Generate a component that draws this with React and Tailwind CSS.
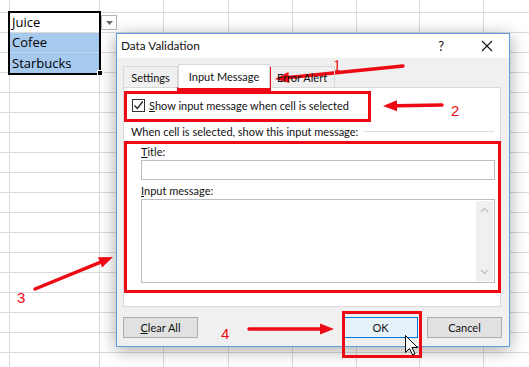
const colW = ["w-[10px]", "w-[90px]", "w-[64px]", "w-[65px]", "w-[64px]", "w-[64px]", "w-[63px]", "w-[64px]", "w-[64px]"];

function Sheet() {
  const rows = Array.from({ length: 19 }, (_, i) => i);
  return (
    <div className="flex flex-col">
      {rows.map((r) => (
        <div key={r} className={`flex shrink-0 border-b border-[#dadada] ${r === 0 ? "h-[13px]" : "h-[20px]"}`}>
          {colW.map((w, c) => (
            <div key={c} className={`${w} shrink-0 border-r border-[#dadada]`} />
          ))}
        </div>
      ))}
    </div>
  );
}

function Selection() {
  return (
    <>
      <div className="absolute left-[8px] top-[11px] w-[93px] h-[64px] border-2 border-black flex flex-col font-['Open_Sans',sans-serif] text-[13px] leading-none text-black">
        <div className="h-[20px] border-b border-[#dadada] bg-white flex items-end pl-[2px] pb-[3px]">Juice</div>
        <div className="h-[20px] border-b border-[#bcd8f4] bg-[#a6c9ee] flex items-end pl-[2px] pb-[3px]">Cofee</div>
        <div className="h-[20px] bg-[#a6c9ee] flex items-end pl-[2px] pb-[3px]">Starbucks</div>
      </div>
      <div className="absolute left-[97px] top-[70px] w-[6px] h-[6px] bg-black border border-white" />
      <div className="absolute left-[101px] top-[15px] w-[16px] h-[15px] bg-white border border-[#b5b5b5] flex items-center justify-center">
        <svg width="7" height="4" viewBox="0 0 7 4"><path d="M0 0h7L3.5 4z" fill="#6b6b6b" /></svg>
      </div>
    </>
  );
}

function Checkbox() {
  return (
    <div className="w-[13px] h-[13px] border border-[#333] bg-white flex items-center justify-center">
      <svg width="11" height="11" viewBox="0 0 11 11">
        <path d="M1.5 5.5l2.8 3 5.5-7" fill="none" stroke="#222" strokeWidth="1.3" />
      </svg>
    </div>
  );
}

function Dialog() {
  return (
    <div className="absolute left-[116px] top-[33px] w-[394px] h-[314px] flex flex-col border border-[#5b9fdc] bg-[#f0f0f0] shadow-[0_3px_16px_rgba(0,0,0,0.35)] font-['Lato',sans-serif] text-[11px] leading-none text-[#111]">
      <div className="h-[24px] shrink-0 bg-white flex items-center pl-[4px]">
        <span className="text-[11.8px]">Data Validation</span>
        <span className="ml-auto mr-[37px] text-[13px]">?</span>
        <svg className="mr-[16px]" width="12" height="12" viewBox="0 0 12 12">
          <path d="M1 1l10 10M11 1L1 11" stroke="#111" strokeWidth="1.1" />
        </svg>
      </div>

      <div className="flex-1 flex flex-col pl-[6px] pr-[7px]">
        <div className="mt-[6px] h-[24px] -mb-px flex items-end relative z-10">
          <div className="w-[55px] h-[21px] border border-b-0 border-[#d9d9d9] flex items-center justify-center mb-px">Settings</div>
          <div className="w-[92px] h-[24px] bg-white border border-b-0 border-[#d9d9d9] flex items-center justify-center pb-[1px]">Input Message</div>
          <div className="w-[65px] h-[21px] border border-b-0 border-l-0 border-[#d9d9d9] flex items-center justify-center mb-px">Error Alert</div>
        </div>

        <div className="h-[220px] bg-white border border-[#d9d9d9] flex flex-col pl-[8px] mr-[1px]">
          <div className="mt-[10px] h-[15px] flex items-center gap-[4px]">
            <Checkbox />
            <span><span className="underline">S</span>how input message when cell is selected</span>
          </div>
          <div className="mt-[10px] h-[16px] flex items-center -ml-[1px] pr-[6px]">
            <span>When cell is selected, show this input message:</span>
            <div className="flex-1 h-px bg-[#dcdcdc] ml-[6px]" />
          </div>
          <div className="pl-[9px] flex flex-col">
            <div className="mt-[4px] h-[16px] flex items-center"><span><span className="underline">T</span>itle:</span></div>
            <div className="mt-[1px] w-[354px] h-[20px] border border-[#bdbdbd] bg-white" />
            <div className="mt-[2px] h-[16px] flex items-center"><span><span className="underline">I</span>nput message:</span></div>
            <div className="mt-[1px] w-[354px] h-[84px] border border-[#bdbdbd] bg-white flex justify-end p-[1px]">
              <div className="w-[17px] bg-[#f0f0f0] flex flex-col items-center justify-between py-[6px]">
                <svg width="9" height="6" viewBox="0 0 9 6"><path d="M1 5l3.5-3.5L8 5" fill="none" stroke="#c2c2c2" strokeWidth="1.4" /></svg>
                <svg width="9" height="6" viewBox="0 0 9 6"><path d="M1 1l3.5 3.5L8 1" fill="none" stroke="#c2c2c2" strokeWidth="1.4" /></svg>
              </div>
            </div>
          </div>
        </div>

        <div className="mt-[10px] flex items-center">
          <div className="w-[75px] h-[21px] bg-[#e1e1e1] border border-[#adadad] flex items-center justify-center">
            <span><span className="underline">C</span>lear All</span>
          </div>
          <div className="ml-auto w-[75px] h-[21px] bg-[#e5f1fb] border border-[#0078d7] flex items-center justify-center">OK</div>
          <div className="ml-[9px] w-[75px] h-[21px] bg-[#e1e1e1] border border-[#adadad] flex items-center justify-center">Cancel</div>
        </div>
      </div>
    </div>
  );
}

function Arrow({ x1, y1, x2, y2 }) {
  const a = Math.atan2(y2 - y1, x2 - x1);
  const L = 14, W = 5.5;
  const bx = x2 - L * Math.cos(a), by = y2 - L * Math.sin(a);
  const px = -Math.sin(a) * W, py = Math.cos(a) * W;
  return (
    <g>
      <line x1={x1} y1={y1} x2={bx} y2={by} stroke="#ee0a14" strokeWidth="3.5" strokeLinecap="round" />
      <polygon points={`${x2},${y2} ${bx + px},${by + py} ${bx - px},${by - py}`} fill="#ee0a14" />
    </g>
  );
}

function Annotations() {
  return (
    <>
      <div className="absolute left-[177px] top-[66px] w-[94px] h-[25px] border-[3px] border-[#ee0a14]" />
      <div className="absolute left-[124px] top-[91px] w-[247px] h-[31px] border-[3px] border-[#ee0a14]" />
      <div className="absolute left-[124px] top-[141px] w-[377px] h-[152px] border-[3px] border-[#ee0a14]" />
      <div className="absolute left-[342px] top-[311px] w-[80px] h-[47px] border-[3px] border-[#ee0a14]" />

      <svg className="absolute left-0 top-0 pointer-events-none" width="529" height="367" viewBox="0 0 529 367">
        <Arrow x1={403} y1={66} x2={275} y2={79} />
        <Arrow x1={442} y1={105} x2={383} y2={106} />
        <Arrow x1={35} y1={289} x2={113} y2={257} />
        <Arrow x1={249} y1={329} x2={334} y2={329} />
        <path d="M405.5 335.5v17l4-4 3.2 6.5 2.3-1.1-3.1-6.4h5.6z" fill="white" stroke="black" strokeWidth="1" strokeLinejoin="round" />
      </svg>

      <span className="absolute left-[333px] top-[58px] font-['Liberation_Serif',serif] text-[16px] leading-none text-[#ee0a14]">1</span>
      <span className="absolute left-[451px] top-[103px] font-['Liberation_Sans',sans-serif] text-[15px] leading-none text-[#ee0a14]">2</span>
      <span className="absolute left-[17px] top-[290px] font-['Liberation_Sans',sans-serif] text-[15px] leading-none text-[#ee0a14]">3</span>
      <span className="absolute left-[221px] top-[326px] font-['Liberation_Sans',sans-serif] text-[15px] leading-none text-[#ee0a14]">4</span>
    </>
  );
}

export default function App() {
  return (
    <div className="relative w-[529px] h-[367px] overflow-hidden bg-white">
      <Sheet />
      <Selection />
      <Dialog />
      <Annotations />
    </div>
  );
}
